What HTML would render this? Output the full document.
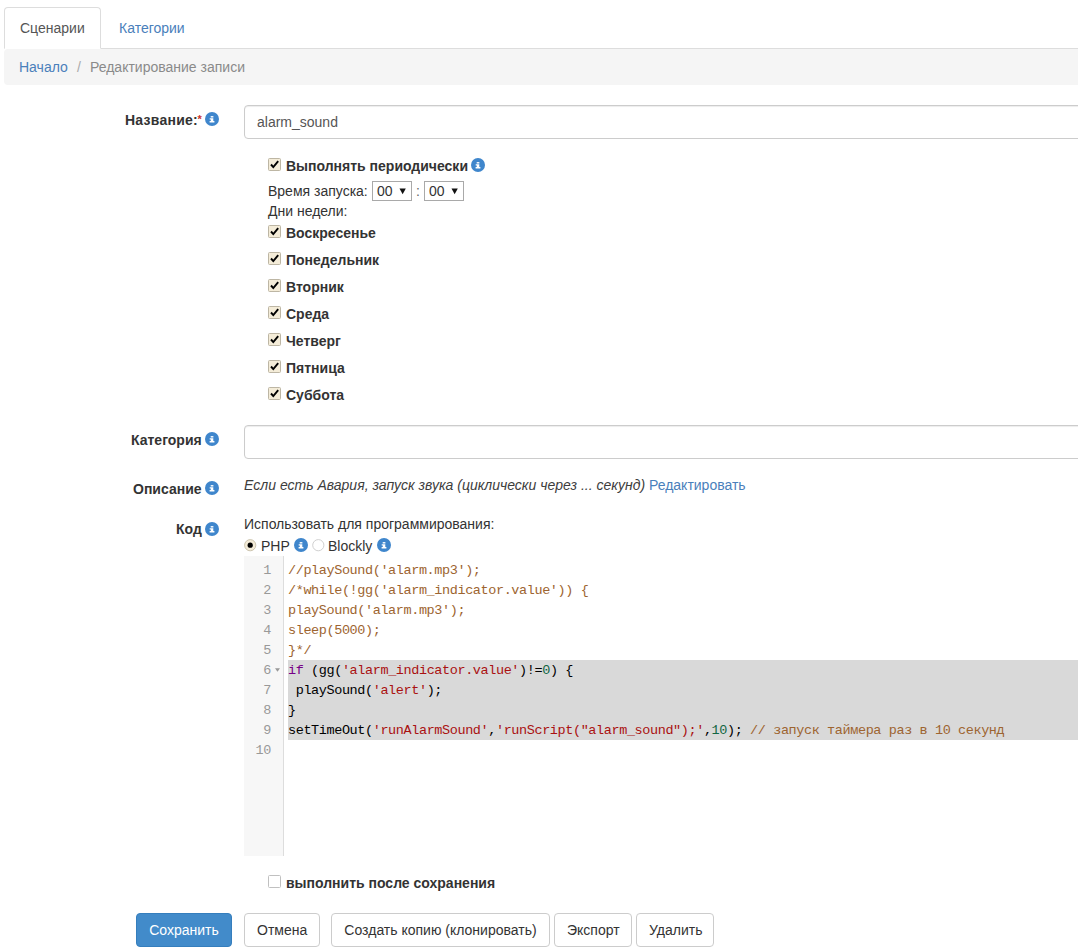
<!DOCTYPE html>
<html><head><meta charset="utf-8">
<style>
*{box-sizing:border-box;margin:0;padding:0}
html,body{width:1078px;height:952px;overflow:hidden;background:#fff}
body{font-family:"Liberation Sans",sans-serif;font-size:14px;line-height:20px;color:#333;position:relative}
.a{position:absolute;white-space:nowrap}
.t{position:absolute;white-space:nowrap;line-height:20px}
.b{font-weight:bold}
.link{color:#4a80bb}
.tab{position:absolute;left:4px;top:7px;width:97px;height:42px;border:1px solid #ddd;border-bottom-color:#fff;border-radius:4px 4px 0 0;background:#fff}
.navline{position:absolute;left:4px;right:0;top:48px;height:1px;background:#ddd}
.bc{position:absolute;left:4px;width:1100px;top:49px;height:36px;background:#f5f5f5;border-radius:4px}
.inp{position:absolute;left:244px;width:900px;height:34px;border:1px solid #ccc;border-radius:4px;background:#fff;box-shadow:inset 0 1px 1px rgba(0,0,0,.075)}
.ic{position:absolute;width:14px;height:14px}
.cb{position:absolute;width:13px;height:13px}
.sel{position:absolute;height:20px;border:1px solid #a9a9a9;background:#fff;font-size:14px;line-height:17px}
.btn{position:absolute;top:913px;height:34px;border:1px solid #ccc;border-radius:4px;background:#fff;color:#333;text-align:center;line-height:20px;padding:6px 12px}
.cm{position:absolute;left:244px;top:556px;width:900px;height:300px;background:#fff;font-family:"Liberation Mono",monospace;font-size:13.5px;letter-spacing:-0.4px;line-height:20px}
.gut{position:absolute;left:0;top:0;width:40px;height:300px;background:#f7f7f7;border-right:1px solid #ddd}
.ln{position:absolute;left:0;width:27px;text-align:right;color:#999}
.cl{position:absolute;left:44px;white-space:pre;color:#000}
.selbg{position:absolute;left:44px;width:900px;top:104px;height:80px;background:#d9d9d9}
.c{color:#9d6430}.k{color:#708}.s{color:#a11}.n{color:#164}
</style></head><body>
<svg width="0" height="0" style="position:absolute">
 <defs>
  <symbol id="info" viewBox="0 0 14 14"><circle cx="7" cy="7" r="7" fill="#3f86cc"/><rect x="5.7" y="4.1" width="2.7" height="1.4" fill="#fff"/><path d="M4.7 6.3H8.3V9.1H9.4V10.6H4.6V9.1H5.8V7.6H4.7Z" fill="#fff"/></symbol>
  <symbol id="chk" viewBox="0 0 13 13"><rect x="0.5" y="0.5" width="12" height="12" rx="1" fill="#f4ecd8" stroke="#bdb6a4"/><path d="M3 6.5l2.3 2.6L10.2 3.2" fill="none" stroke="#000" stroke-width="1.9"/></symbol>
  <symbol id="unchk" viewBox="0 0 13 13"><rect x="0.5" y="0.5" width="12" height="12" rx="1" fill="#fff" stroke="#c0c0c0"/></symbol>
 </defs>
</svg>

<!-- tabs -->
<div class="navline"></div>
<div class="tab"></div>
<div class="t" style="left:20px;top:18px;color:#555">Сценарии</div>
<div class="t link" style="left:119px;top:18px">Категории</div>

<!-- breadcrumb -->
<div class="bc"></div>
<div class="t link" style="left:19px;top:57px">Начало</div>
<div class="t" style="left:77px;top:57px;color:#aaa">/</div>
<div class="t" style="left:90px;top:57px;color:#8a8a8a">Редактирование записи</div>

<!-- name row -->
<div class="t b" style="left:125px;top:110px;letter-spacing:0.25px">Название:<span style="color:#c9302c;position:relative;top:-2px;font-size:11px;margin-left:-0.5px">*</span></div>
<svg class="ic" style="left:205px;top:112px"><use href="#info"/></svg>
<div class="inp" style="top:105px"></div>
<div class="t" style="left:257px;top:112px;color:#555">alarm_sound</div>

<svg class="cb" style="left:268px;top:158px"><use href="#chk"/></svg>
<div class="t b" style="left:286px;top:156px">Выполнять периодически</div>
<svg class="ic" style="left:471px;top:158px"><use href="#info"/></svg>

<div class="t" style="left:268px;top:181px">Время запуска:</div>
<div class="sel" style="left:372px;top:181px;width:40px"><span class="a" style="left:4px;top:1px">00</span><svg class="a" style="left:26px;top:6px" width="8" height="7"><path d="M0.5 0.5H6.8L3.65 6.3Z" fill="#111"/></svg></div>
<div class="t" style="left:416px;top:181px;color:#666">:</div>
<div class="sel" style="left:424px;top:181px;width:40px"><span class="a" style="left:4px;top:1px">00</span><svg class="a" style="left:26px;top:6px" width="8" height="7"><path d="M0.5 0.5H6.8L3.65 6.3Z" fill="#111"/></svg></div>
<div class="t" style="left:268px;top:201px">Дни недели:</div>

<!-- days -->
<svg class="cb" style="left:268px;top:225px"><use href="#chk"/></svg>
<div class="t b" style="left:286px;top:222.9px">Воскресенье</div>
<svg class="cb" style="left:268px;top:252px"><use href="#chk"/></svg>
<div class="t b" style="left:286px;top:249.9px">Понедельник</div>
<svg class="cb" style="left:268px;top:279px"><use href="#chk"/></svg>
<div class="t b" style="left:286px;top:276.9px">Вторник</div>
<svg class="cb" style="left:268px;top:306px"><use href="#chk"/></svg>
<div class="t b" style="left:286px;top:303.9px">Среда</div>
<svg class="cb" style="left:268px;top:333px"><use href="#chk"/></svg>
<div class="t b" style="left:286px;top:330.9px">Четверг</div>
<svg class="cb" style="left:268px;top:360px"><use href="#chk"/></svg>
<div class="t b" style="left:286px;top:357.9px">Пятница</div>
<svg class="cb" style="left:268px;top:387px"><use href="#chk"/></svg>
<div class="t b" style="left:286px;top:384.9px">Суббота</div>

<!-- category -->
<div class="t b" style="left:131px;top:430px">Категория</div>
<svg class="ic" style="left:205px;top:432px"><use href="#info"/></svg>
<div class="inp" style="top:425px"></div>

<!-- description -->
<div class="t b" style="left:133px;top:479px">Описание</div>
<svg class="ic" style="left:205px;top:481px"><use href="#info"/></svg>
<div class="t" style="left:244px;top:475px;font-style:italic;color:#3d3d3d">Если есть Авария, запуск звука (циклически через ... секунд) <span class="link" style="font-style:normal">Редактировать</span></div>

<!-- code -->
<div class="t b" style="left:176px;top:519px">Код</div>
<svg class="ic" style="left:205px;top:522px"><use href="#info"/></svg>
<div class="t" style="left:244px;top:514px">Использовать для программирования:</div>

<svg class="a" style="left:244px;top:539px" width="13" height="13" viewBox="0 0 13 13"><circle cx="6.2" cy="6.2" r="5.6" fill="#f4ecd8" stroke="#cdc5b0"/><circle cx="6.2" cy="6.2" r="2.6" fill="#000"/></svg>
<div class="t" style="left:261px;top:536px">PHP</div>
<svg class="ic" style="left:294px;top:538px"><use href="#info"/></svg>
<svg class="a" style="left:312px;top:539px" width="13" height="13" viewBox="0 0 13 13"><circle cx="6.3" cy="6.2" r="5.6" fill="#fff" stroke="#d0d0d0"/></svg>
<div class="t" style="left:328px;top:536px">Blockly</div>
<svg class="ic" style="left:377px;top:538px"><use href="#info"/></svg>
<div class="cm">
 <div class="gut"></div>
 <div class="selbg"></div>
<div class="ln" style="top:4.5px">1</div>
<div class="cl" style="top:4.5px"><span class="c">//playSound('alarm.mp3');</span></div>
<div class="ln" style="top:24.5px">2</div>
<div class="cl" style="top:24.5px"><span class="c">/*while(!gg('alarm_indicator.value')) {</span></div>
<div class="ln" style="top:44.5px">3</div>
<div class="cl" style="top:44.5px"><span class="c">playSound('alarm.mp3');</span></div>
<div class="ln" style="top:64.5px">4</div>
<div class="cl" style="top:64.5px"><span class="c">sleep(5000);</span></div>
<div class="ln" style="top:84.5px">5</div>
<div class="cl" style="top:84.5px"><span class="c">}*/</span></div>
<div class="ln" style="top:104.5px">6</div>
<div class="cl" style="top:104.5px"><span class="k">if</span> (gg(<span class="s">'alarm_indicator.value'</span>)!=<span class="n">0</span>) {</div>
<div class="ln" style="top:124.5px">7</div>
<div class="cl" style="top:124.5px"> playSound(<span class="s">'alert'</span>);</div>
<div class="ln" style="top:144.5px">8</div>
<div class="cl" style="top:144.5px">}</div>
<div class="ln" style="top:164.5px">9</div>
<div class="cl" style="top:164.5px">setTimeOut(<span class="s">'runAlarmSound'</span>,<span class="s">'runScript("alarm_sound");'</span>,<span class="n">10</span>); <span class="c">// запуск таймера раз в 10 секунд</span></div>
<div class="ln" style="top:184.5px">10</div>
<div class="cl" style="top:184.5px"></div>
<svg class="a" style="left:30px;top:111px" width="7" height="6"><path d="M1 1.2h5L3.5 4.8z" fill="#999"/></svg>
</div>

<svg class="cb" style="left:268px;top:875px"><use href="#unchk"/></svg>
<div class="t b" style="left:286px;top:873px">выполнить после сохранения</div>

<div class="btn" style="left:136px;width:96px;background:#428bca;border-color:#357ebd;color:#fff">Сохранить</div>
<div class="btn" style="left:244px;width:76px">Отмена</div>
<div class="btn" style="left:331px;width:219px">Создать копию (клонировать)</div>
<div class="btn" style="left:554px;width:78px">Экспорт</div>
<div class="btn" style="left:636px;width:78px">Удалить</div>
</body></html>
